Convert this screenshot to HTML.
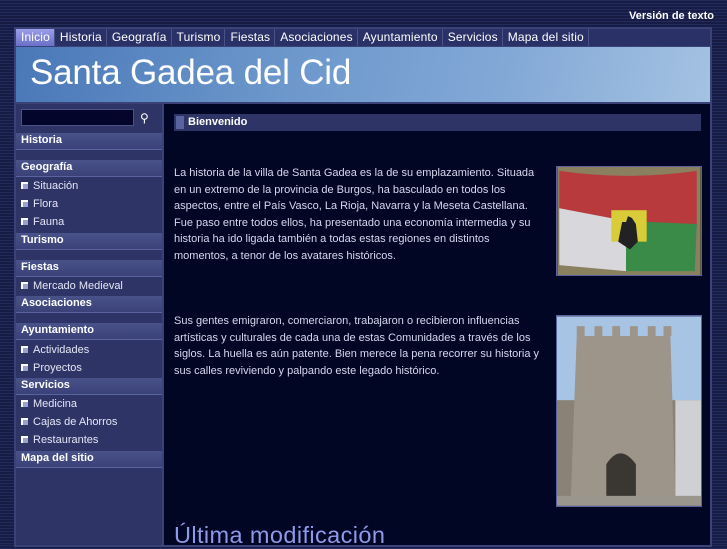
<!DOCTYPE html>
<html><head><meta charset="utf-8"><style>
*{margin:0;padding:0;box-sizing:border-box}
body{width:727px;height:545px;overflow:hidden;background:#1d2452;background-image:repeating-linear-gradient(180deg,#232b5c 0 1px,#161c44 1px 3px);font-family:"Liberation Sans",sans-serif;position:relative}
.vt{position:absolute;right:13px;top:10px;color:#fff;font-size:11px;font-weight:bold}
.frame{position:absolute;left:14px;top:27px;width:698px;height:520px;background:#3a4278}
.nav{position:absolute;left:16px;top:29px;width:694px;height:17px;background:#2a3166;display:flex}
.nav span{color:#fff;font-size:12px;padding:1px 4px 0 5px;border-right:1px solid #4a5288;height:17px;line-height:15px;letter-spacing:0.15px}
.nav span.on{background:linear-gradient(#9a9ee8,#6a70c8)}
.banner{position:absolute;left:16px;top:47px;width:694px;height:55px;background:linear-gradient(100deg,#4a78b8 0%,#6d98cc 40%,#82a8d6 70%,#a4c2e2 100%)}
.banner h1{position:absolute;left:14px;top:6px;color:#fff;font-size:35px;font-weight:normal;letter-spacing:-0.2px}
.side{position:absolute;left:16px;top:104px;width:146px;height:441px;background:#2e3566}
.search{position:absolute;left:5px;top:5px;width:113px;height:17px;background:#03062a;border:1px solid #4a5288}
.mag{position:absolute;left:124px;top:7px;color:#fff;font-size:12px}
.side .h,.side .i{position:absolute;left:0;width:146px}
.h{height:17px;background:linear-gradient(#4a528a,#3a4278);color:#fff;font-weight:bold;font-size:11px;padding:1px 5px;border-bottom:1px solid #5a62a0}
.i{height:18px;color:#e4e6f6;font-size:11px;padding:2px 5px}
.i:before{content:"";display:inline-block;width:5px;height:5px;border-left:2px solid #fff;border-top:2px solid #fff;background:#9aa0d0;margin-right:5px}
.main{position:absolute;left:164px;top:104px;width:546px;height:441px;background:#000624}
.bh{position:absolute;left:10px;top:10px;width:527px;height:17px;background:#2e3566;color:#fff;font-weight:bold;font-size:11px;padding:2px 0 0 14px}
.bh:before{content:"";position:absolute;left:2px;top:2px;width:8px;height:13px;background:#5a62a0}
p{position:absolute;left:10px;width:372px;color:#d6d8ee;font-size:11px;line-height:16.5px}
.img{position:absolute;left:392px;border:1px solid #5a62a0}
h2{position:absolute;left:10px;top:418px;color:#8e9ae8;font-size:23.5px;font-weight:normal;letter-spacing:0.4px}
</style></head><body>
<div class="vt">Versión de texto</div>
<div class="frame"></div>
<div class="nav"><span class="on">Inicio</span><span>Historia</span><span>Geografía</span><span>Turismo</span><span>Fiestas</span><span>Asociaciones</span><span>Ayuntamiento</span><span>Servicios</span><span>Mapa del sitio</span></div>
<div class="banner"><h1>Santa Gadea del Cid</h1></div>
<div class="side">
<div class="search"></div><div class="mag">&#9906;</div>
<div class="h" style="top:29px">Historia</div>
<div class="h" style="top:56px">Geografía</div>
<div class="i" style="top:74px">Situación</div>
<div class="i" style="top:92px">Flora</div>
<div class="i" style="top:110px">Fauna</div>
<div class="h" style="top:129px">Turismo</div>
<div class="h" style="top:156px">Fiestas</div>
<div class="i" style="top:174px">Mercado Medieval</div>
<div class="h" style="top:192px">Asociaciones</div>
<div class="h" style="top:219px">Ayuntamiento</div>
<div class="i" style="top:238px">Actividades</div>
<div class="i" style="top:256px">Proyectos</div>
<div class="h" style="top:274px">Servicios</div>
<div class="i" style="top:292px">Medicina</div>
<div class="i" style="top:310px">Cajas de Ahorros</div>
<div class="i" style="top:328px">Restaurantes</div>
<div class="h" style="top:347px">Mapa del sitio</div>
</div>
<div class="main">
<div class="bh">Bienvenido</div>
<p style="top:61px">La historia de la villa de Santa Gadea es la de su emplazamiento. Situada en un extremo de la provincia de Burgos, ha basculado en todos los aspectos, entre el País Vasco, La Rioja, Navarra y la Meseta Castellana. Fue paso entre todos ellos, ha presentado una economía intermedia y su historia ha ido ligada también a todas estas regiones en distintos momentos, a tenor de los avatares históricos.</p>
<p style="top:209px">Sus gentes emigraron, comerciaron, trabajaron o recibieron influencias artísticas y culturales de cada una de estas Comunidades a través de los siglos. La huella es aún patente. Bien merece la pena recorrer su historia y sus calles reviviendo y palpando este legado histórico.</p>
<svg class="img" style="top:62px" width="146" height="110" viewBox="0 0 146 110">
<rect width="146" height="110" fill="#8a8060"/>
<path d="M2 4 Q70 14 142 4 L142 60 L70 55 L2 42Z" fill="#b83a3c"/>
<path d="M2 42 L70 55 L70 106 L2 100Z" fill="#d8d8dc"/>
<path d="M70 55 L142 58 L140 106 L70 106Z" fill="#3a8a48"/>
<rect x="55" y="44" width="36" height="32" fill="#d8cc38"/>
<path d="M62 76 L66 56 L70 56 L72 50 L76 52 L80 58 L82 76 L74 84Z" fill="#222"/>
</svg>
<svg class="img" style="top:211px" width="146" height="192" viewBox="0 0 146 192">
<rect width="146" height="192" fill="#a8c4e4"/>
<rect x="0" y="85" width="146" height="107" fill="#8a8276"/>
<rect x="120" y="85" width="26" height="100" fill="#cfd0d4"/>
<path d="M20 20 L115 20 L120 185 L14 185Z" fill="#9e958a"/>
<path d="M20 10 h8 v10 h-8z M38 10 h8 v10 h-8z M56 10 h8 v10 h-8z M74 10 h8 v10 h-8z M92 10 h8 v10 h-8z M108 10 h8 v10 h-8z" fill="#9e958a"/>
<path d="M50 185 L50 150 Q64 128 80 150 L80 185Z" fill="#3a3632"/>
<rect x="0" y="182" width="146" height="10" fill="#9a968e"/>
</svg>
<h2>Última modificación</h2>
</div>
</body></html>
